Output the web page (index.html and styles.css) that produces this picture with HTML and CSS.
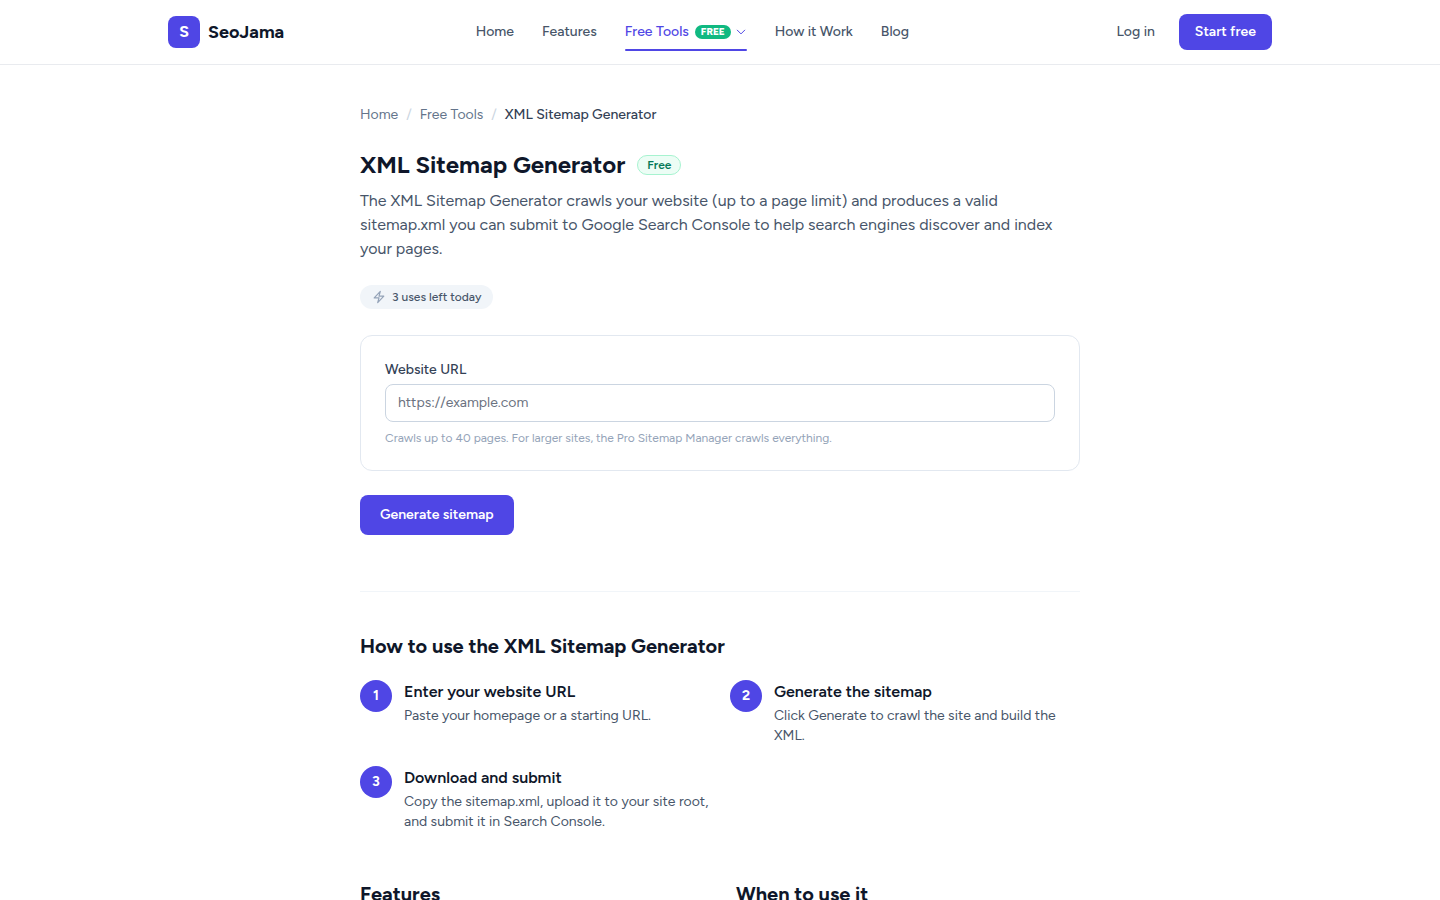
FILE: index.html
```html
<!DOCTYPE html>
<html lang="en">
<head>
  <meta charset="UTF-8">
  <meta name="viewport" content="width=device-width, initial-scale=1">
  <title>XML Sitemap Generator - SeoJama</title>
  <link rel="stylesheet" href="styles.css">
</head>
<body>

  <header class="site-header">
    <div class="header-inner">
      <a href="#" class="logo">
        <span class="logo-mark">S</span>
        <span class="logo-text">SeoJama</span>
      </a>
      <nav class="main-nav">
        <a href="#">Home</a>
        <a href="#">Features</a>
        <a href="#" class="active">
          Free Tools
          <span class="nav-badge">FREE</span>
          <svg class="chevron" viewBox="0 0 24 24" fill="none" stroke="currentColor" stroke-width="2" stroke-linecap="round" stroke-linejoin="round"><path d="M19.5 8.25l-7.5 7.5-7.5-7.5"/></svg>
        </a>
        <a href="#">How it Work</a>
        <a href="#">Blog</a>
      </nav>
      <div class="header-actions">
        <a href="#" class="login">Log in</a>
        <a href="#" class="btn btn-small">Start free</a>
      </div>
    </div>
  </header>

  <main class="page">
    <nav class="breadcrumb" aria-label="Breadcrumb">
      <a href="#">Home</a>
      <span class="sep">/</span>
      <a href="#">Free Tools</a>
      <span class="sep">/</span>
      <span class="current">XML Sitemap Generator</span>
    </nav>

    <div class="title-row">
      <h1>XML Sitemap Generator</h1>
      <span class="free-badge">Free</span>
    </div>
    <p class="intro">The XML Sitemap Generator crawls your website (up to a page limit) and produces a valid sitemap.xml you can submit to Google Search Console to help search engines discover and index your pages.</p>

    <div class="uses">
      <svg viewBox="0 0 24 24" fill="none" stroke="currentColor" stroke-width="2" stroke-linecap="round" stroke-linejoin="round"><path d="M3.75 13.5l10.5-11.25L12 10.5h8.25L9.75 21.75 12 13.5H3.75z"/></svg>
      3 uses left today
    </div>

    <form id="sitemapForm">
      <div class="card">
        <label for="url">Website URL</label>
        <input type="url" id="url" placeholder="https://example.com" required>
        <p class="hint">Crawls up to 40 pages. For larger sites, the Pro Sitemap Manager crawls everything.</p>
      </div>
      <button type="submit" class="btn">Generate sitemap</button>
    </form>

    <section class="how-to">
      <h2>How to use the XML Sitemap Generator</h2>
      <ol class="steps">
        <li>
          <span class="step-number">1</span>
          <div>
            <h3>Enter your website URL</h3>
            <p>Paste your homepage or a starting URL.</p>
          </div>
        </li>
        <li>
          <span class="step-number">2</span>
          <div>
            <h3>Generate the sitemap</h3>
            <p>Click Generate to crawl the site and build the XML.</p>
          </div>
        </li>
        <li>
          <span class="step-number">3</span>
          <div>
            <h3>Download and submit</h3>
            <p>Copy the sitemap.xml, upload it to your site root, and submit it in Search Console.</p>
          </div>
        </li>
      </ol>
    </section>

    <div class="details">
      <section>
        <h2>Features</h2>
      </section>
      <section>
        <h2>When to use it</h2>
      </section>
    </div>
  </main>

</body>
</html>
```
FILE: styles.css
```css
* {
  box-sizing: border-box;
}
body {
  margin: 0;
  font-family: Figtree, Lato, sans-serif;
  font-size: 16px;
  line-height: 24px;
  background: #fff;
  color: #0f172a;
}
h1, h2, h3, p, ol {
  margin: 0;
  padding: 0;
}
a {
  color: inherit;
  text-decoration: none;
}

/* header */
.site-header {
  border-bottom: 1px solid #e9ebef;
}
.header-inner {
  display: flex;
  align-items: center;
  justify-content: space-between;
  max-width: 1152px;
  height: 64px;
  margin: 0 auto;
  padding: 0 24px;
}
.logo {
  display: flex;
  align-items: center;
  gap: 8px;
}
.logo-mark {
  display: flex;
  align-items: center;
  justify-content: center;
  width: 32px;
  height: 32px;
  border-radius: 8px;
  background: #4f46e5;
  color: #fff;
  font-weight: 700;
}
.logo-text {
  font-size: 18px;
  font-weight: 700;
}
.main-nav {
  display: flex;
  gap: 28px;
  font-size: 14px;
  font-weight: 500;
  line-height: 20px;
  color: #475569;
}
.main-nav a {
  position: relative;
  display: flex;
  align-items: center;
  padding: 8px 0;
}
.main-nav a:hover {
  color: #0f172a;
}
.main-nav .active {
  color: #4f46e5;
}
.main-nav .active::after {
  content: "";
  position: absolute;
  right: 0;
  bottom: -1px;
  left: 0;
  height: 2px;
  border-radius: 999px;
  background: #4f46e5;
}
.nav-badge {
  margin: 0 4px 0 6px;
  padding: 0 6px;
  border-radius: 999px;
  background: #10b981;
  color: #fff;
  font-size: 10px;
  font-weight: 800;
  line-height: 14px;
}
.chevron {
  width: 12px;
  height: 12px;
}
.header-actions {
  display: flex;
  align-items: center;
  gap: 8px;
  font-size: 14px;
  line-height: 20px;
}
.login {
  padding: 8px 16px;
  color: #475569;
  font-weight: 500;
}
.btn {
  padding: 10px 20px;
  border: none;
  border-radius: 8px;
  background: #4f46e5;
  color: #fff;
  font-family: inherit;
  font-size: 14px;
  font-weight: 600;
  line-height: 20px;
  cursor: pointer;
}
.btn:hover {
  background: #4338ca;
}
.btn-small {
  padding: 8px 16px;
}

/* page */
.page {
  max-width: 768px;
  margin: 0 auto;
  padding: 40px 24px;
}
.breadcrumb {
  display: flex;
  gap: 8px;
  margin-bottom: 24px;
  font-size: 14px;
  line-height: 20px;
  color: #64748b;
}
.breadcrumb .sep {
  color: #cbd5e1;
}
.breadcrumb .current {
  color: #334155;
  font-weight: 500;
}
.title-row {
  display: flex;
  align-items: center;
  gap: 12px;
}
h1 {
  font-size: 24px;
  font-weight: 700;
  line-height: 32px;
}
.free-badge {
  padding: 1px 9px;
  border: 1px solid #a7f3d0;
  border-radius: 999px;
  background: #ecfdf5;
  color: #047857;
  font-size: 12px;
  font-weight: 600;
  line-height: 16px;
}
.intro {
  margin-top: 8px;
  color: #475569;
}
.uses {
  display: flex;
  align-items: center;
  gap: 6px;
  width: fit-content;
  margin: 24px 0 26px;
  padding: 4px 12px;
  border-radius: 999px;
  background: #f1f5f9;
  color: #475569;
  font-size: 12px;
  font-weight: 500;
  line-height: 16px;
}
.uses svg {
  width: 14px;
  height: 14px;
  color: #94a3b8;
}

/* form */
.card {
  margin-bottom: 24px;
  padding: 24px;
  border: 1px solid #e2e8f0;
  border-radius: 12px;
}
.card label {
  display: block;
  margin-bottom: 4px;
  font-size: 14px;
  font-weight: 500;
  line-height: 20px;
  color: #334155;
}
.card input {
  display: block;
  width: 100%;
  padding: 8px 12px;
  border: 1px solid #cbd5e1;
  border-radius: 8px;
  background: #fff;
  color: #0f172a;
  font-family: inherit;
  font-size: 14px;
  line-height: 20px;
}
.card input::placeholder {
  color: #6b7280;
}
.hint {
  margin-top: 8px;
  color: #94a3b8;
  font-size: 12px;
  line-height: 16px;
}

/* how to use */
.how-to {
  margin-top: 56px;
  padding-top: 40px;
  border-top: 1px solid #f1f5f9;
}
h2 {
  font-size: 20px;
  font-weight: 700;
  line-height: 28px;
}
.steps {
  display: grid;
  grid-template-columns: 1fr 1fr;
  gap: 20px;
  margin-top: 20px;
  list-style: none;
}
.steps li {
  display: flex;
  gap: 12px;
}
.step-number {
  display: flex;
  flex-shrink: 0;
  align-items: center;
  justify-content: center;
  width: 32px;
  height: 32px;
  border-radius: 50%;
  background: #4f46e5;
  color: #fff;
  font-size: 14px;
  font-weight: 700;
}
.steps h3 {
  font-size: 16px;
  font-weight: 600;
}
.steps p {
  margin-top: 2px;
  color: #475569;
  font-size: 14px;
  line-height: 20px;
}
.details {
  display: grid;
  grid-template-columns: 1fr 1fr;
  gap: 32px;
  margin-top: 48px;
}
```
